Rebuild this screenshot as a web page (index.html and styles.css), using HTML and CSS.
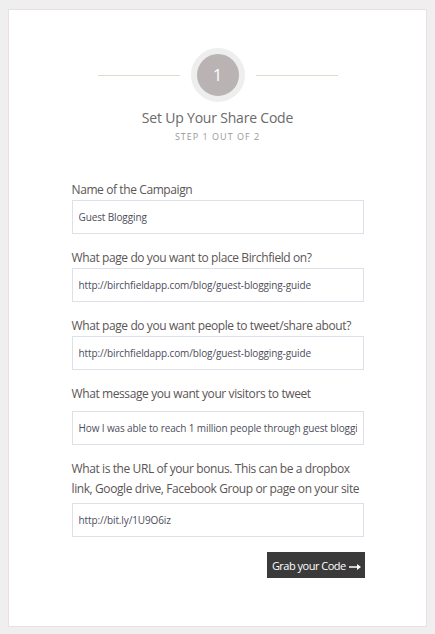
FILE: index.html
```html
<!DOCTYPE html>
<html lang="en">
<head>
    <meta charset="UTF-8">
    <meta name="viewport" content="width=device-width, initial-scale=1.0">
    <title>Birchfield - Share Code</title>
    <link rel="stylesheet" href="styles.css">
</head>
<body>
    <div class="card">
        <div class="stepper">
            <span class="step-line"></span>
            <span class="step-circle">1</span>
            <span class="step-line"></span>
        </div>
        <h2 class="title">Set Up Your Share Code</h2>
        <div class="subtitle">STEP 1 OUT OF 2</div>

        <form class="form">
            <div class="field">
                <label for="campaign">Name of the Campaign</label>
                <input type="text" id="campaign" value="Guest Blogging">
            </div>
            <div class="field">
                <label for="placePage">What page do you want to place Birchfield on?</label>
                <input type="text" id="placePage" value="http://birchfieldapp.com/blog/guest-blogging-guide">
            </div>
            <div class="field">
                <label for="sharePage">What page do you want people to tweet/share about?</label>
                <input type="text" id="sharePage" value="http://birchfieldapp.com/blog/guest-blogging-guide">
            </div>
            <div class="field field-message">
                <label for="message">What message you want your visitors to tweet</label>
                <input type="text" id="message" value="How I was able to reach 1 million people through guest blogging">
            </div>
            <div class="field field-bonus">
                <label for="bonus">What is the URL of your bonus. This can be a dropbox link, Google drive, Facebook Group or page on your site</label>
                <input type="text" id="bonus" value="http://bit.ly/1U9O6iz">
            </div>
            <div class="actions">
                <button type="button" class="btn">Grab your Code
                    <svg class="arrow" width="12" height="8" viewBox="0 0 12 8"><path d="M0 3.3h8V1l4 3-4 3V4.7H0z" fill="#fff"/></svg>
                </button>
            </div>
        </form>
    </div>
</body>
</html>
```

FILE: styles.css
```css
body {
    margin: 9px 8px 8px;
    background: #efefef;
    font-family: "Open Sans", Arial, sans-serif;
}
.card {
    background: #fff;
    border: 1px solid #ecdfdf;
    padding: 38px 0 48px;
}
.stepper {
    display: flex;
    align-items: center;
    justify-content: center;
    gap: 11px;
}
.step-line {
    width: 82px;
    height: 1px;
    background: #e2dbca;
}
.step-circle {
    width: 42px;
    height: 42px;
    border: 6px solid #eeeeee;
    border-radius: 50%;
    background: #bab3b3;
    color: #fff;
    font-size: 16px;
    line-height: 42px;
    text-align: center;
}
.title {
    margin: 6px 0 0;
    font-size: 14px;
    line-height: 20px;
    font-weight: normal;
    letter-spacing: -0.2px;
    color: #6a6a6a;
    text-align: center;
}
.subtitle {
    margin-top: 2px;
    font-size: 9px;
    line-height: 14px;
    letter-spacing: 1px;
    color: #999;
    text-align: center;
}
.form {
    width: 292px;
    margin: 36px auto 0;
}
.field {
    margin-bottom: 14px;
}
.field label {
    display: block;
    font-size: 12px;
    line-height: 20px;
    letter-spacing: -0.4px;
    color: #5b5555;
}
.field input {
    display: block;
    width: 100%;
    height: 34px;
    box-sizing: border-box;
    border: 1px solid #dde0e8;
    padding: 0 6px;
    font-family: "Open Sans", Arial, sans-serif;
    font-size: 10px;
    letter-spacing: -0.12px;
    color: #4d4d5a;
    outline: none;
}
.field-message label {
    margin-bottom: 7px;
}
.field-bonus label {
    margin-bottom: 4px;
}
.actions {
    display: flex;
    justify-content: flex-end;
    margin-top: 15px;
    margin-right: -1px;
}
.btn {
    width: 98px;
    height: 26px;
    border: none;
    background: #3a3a3a;
    color: #fff;
    font-family: "Open Sans", Arial, sans-serif;
    font-size: 11px;
    letter-spacing: -0.5px;
    padding: 0 0 0 2px;
}
.arrow {
    vertical-align: middle;
    margin-left: 1px;
}
```
